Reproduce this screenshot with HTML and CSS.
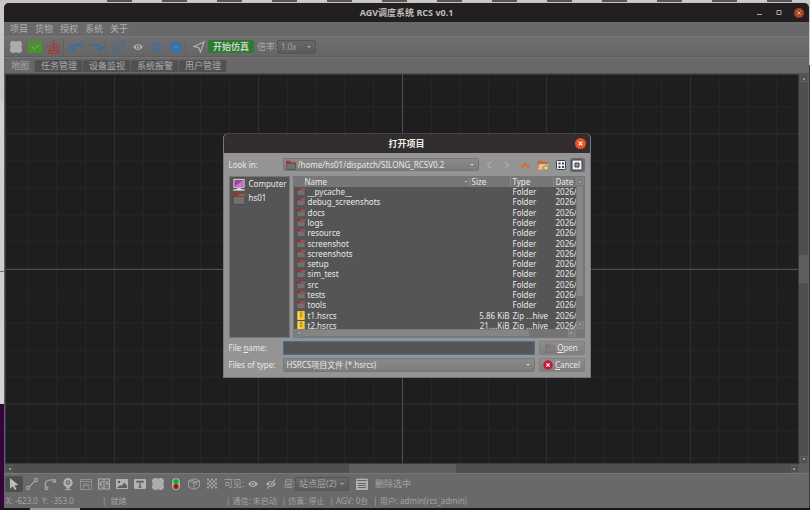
FILE: index.html
```
<!DOCTYPE html>
<html lang="zh">
<head>
<meta charset="utf-8">
<title>AGV调度系统 RCS v0.1</title>
<link rel="stylesheet" href="styles.css">
</head>
<body>
<svg width="0" height="0" class="defs" aria-hidden="true">
  <symbol id="folder" viewBox="0 0 12 12"><path d="M0 2q0-1 1-1h3.500l1 1H11q1 0 1 1v2H0z" fill="#a62f3c"/><path d="M6 2h5q1 0 1 1v1H5z" fill="#b5603f"/><path d="M.5 4h11v6.500q0 1-1 1h-9q-1 0-1-1z" fill="#747071" stroke="#454243" stroke-width=".7"/></symbol>
  <symbol id="zip" viewBox="0 0 12 12"><rect x="1" y="0" width="10" height="12" rx="1" fill="#f3c637"/><path d="M6 1v7" stroke="#7b5a15" stroke-width="1.600" stroke-dasharray="1.300 .7"/><path d="M3 1v10" stroke="#ffe68a"/></symbol>
  <symbol id="eye" viewBox="0 0 12 12"><path d="M0 6Q6-1.500 12 6Q6 13.500 0 6z" fill="#b0b0b0"/><circle cx="6" cy="6" r="2.500" fill="#686868"/><circle cx="6" cy="6" r="1.200" fill="#b0b0b0"/></symbol>
  <symbol id="chip" viewBox="0 0 12 12"><path d="M2 0h2l1 .6h2L8 0h2l2 2v2l-.6 1v2l.6 1v2l-2 2H8l-1-.6H5L4 12H2L0 10V8l.6-1V5L0 4V2z" fill="#acacac"/></symbol>
</svg>
<div class="desk-left" aria-hidden="true"></div>
<main class="window">
  <header class="titlebar">
    <h1>AGV调度系统 RCS v0.1</h1>
    <div class="winbtns">
      <button aria-label="最小化"><svg viewBox="0 0 10 10"><path d="M3 6.500h5" stroke="#a8a8a8"/></svg></button>
      <button aria-label="最大化"><svg viewBox="0 0 10 10"><path d="M3 2.500h4v4H3z" fill="none" stroke="#a8a8a8"/></svg></button>
      <button aria-label="关闭" class="close"><svg viewBox="0 0 10 10"><path d="M3.300 3.300l3.400 3.400M6.700 3.300L3.300 6.700" stroke="#c9b5ad"/></svg></button>
    </div>
  </header>
  <nav class="menu"><button>项目</button><button>货物</button><button>授权</button><button>系统</button><button>关于</button></nav>
  <div class="toolbar">
    <button aria-label="车辆"><svg><use href="#chip"/></svg></button>
    <button aria-label="任务"><svg class="big" viewBox="0 0 14 14"><path d="M0 1h3v2h8V1h3v12H0z" fill="#4b942b"/><path d="M4 0h6v2H4z" fill="#4b942b"/><path d="M4 7l2.500 2L10.500 5.500" fill="none" stroke="#8aa67c"/></svg></button>
    <button aria-label="报警"><svg class="big" viewBox="0 0 14 14" fill="none" stroke="#ad3328"><path d="M3.500 10V7.500a3.500 3.500 0 0 1 7 0V10M1.500 10.500h11v2.500h-11zM7 0v2.500M2.500 2l1.500 1.500M11.500 2l-1.500 1.500M0 6.500h2M12 6.500h2M7 7v3"/><circle cx="7" cy="7" r="1" fill="#ad3328"/></svg></button>
    <span class="sep"></span>
    <button aria-label="撤销"><svg class="big" viewBox="0 0 14 14"><path d="M2 7.500Q6 3 13 5.500" fill="none" stroke="#2e6eae" stroke-width="1.700"/><path d="M0 5v5h5.500z" fill="#2e6eae"/></svg></button>
    <button aria-label="重做"><svg class="big" viewBox="0 0 14 14"><path d="M12 7.500Q8 3 1 5.500" fill="none" stroke="#2e6eae" stroke-width="1.700"/><path d="M14 5v5H8.500z" fill="#2e6eae"/></svg></button>
    <span class="sep"></span>
    <button aria-label="适应窗口"><svg viewBox="0 0 12 12" fill="none" stroke="#2e6eae"><path d="M.5 6V1.500H6M11.500 6v5H6" stroke-dasharray="1.500 1"/><path d="M1.500 10.500l9-9M8 .5h3.500v3.500M.5 8v3.500H4"/></svg></button>
    <button aria-label="显示"><svg class="small"><use href="#eye"/></svg></button>
    <button aria-label="图层"><svg viewBox="0 0 12 12" fill="none" stroke="#2e72b8"><path d="M4.200 1L.5 6l3.700 5 3.700-5zM7.800 1L4.100 6l3.700 5 3.700-5z"/></svg></button>
    <button aria-label="设置"><svg viewBox="0 0 12 12"><path d="M3 .8l2 .8 1-1.400 1 1.400 2-.8 1 2.200 2 .5L11.200 6l.8 2.500-2 .5-1 2.200-2-.8-1 1.400-1-1.400-2 .8L2 9l-2-.5L.8 6 0 3.500 2 3z" fill="#2b73bd"/><circle cx="6" cy="6" r="1.800" fill="#7b7b7b"/></svg></button>
    <span class="sep"></span>
    <button aria-label="发送"><svg viewBox="0 0 12 12" fill="none" stroke="#b4b4b4" stroke-width="1.100"><path d="M11 1L1 5.500l4.500 1L7.500 11z"/></svg></button>
    <button class="go">开始仿真</button>
    <label for="rate">倍率:</label>
    <span class="select rate"><select id="rate"><option>1.0x</option></select></span>
  </div>
  <div class="tabs" role="tablist"><button role="tab" class="on" aria-selected="true">地图</button><button role="tab">任务管理</button><button role="tab">设备监视</button><button role="tab">系统报警</button><button role="tab">用户管理</button></div>
  <section class="work">
    <div class="canvas"></div>
    <div class="vbar"><i class="arrow up"></i><i class="thumb"></i><i class="arrow down"></i></div>
    <div class="hbar"><i class="arrow left"></i><i class="thumb"></i><i class="arrow right"></i></div>
  </section>
  <div class="tools">
    <button aria-label="选择" class="on"><svg viewBox="0 0 12 12"><path d="M2 0l8.500 7-4 .5 2 3.500-1.800 1-2-3.700L2 11z" fill="#bbb"/></svg></button>
    <button aria-label="直线"><svg viewBox="0 0 12 12" fill="none" stroke="#aaa" stroke-width="1.100"><circle cx="10" cy="2" r="1.600"/><circle cx="2" cy="10" r="1.600"/><path d="M3.200 8.800l5.600-5.600"/></svg></button>
    <button aria-label="曲线"><svg viewBox="0 0 12 12" fill="none" stroke="#aaa" stroke-width="1.200"><circle cx="10.300" cy="3" r="1.400"/><circle cx="2.500" cy="10.300" r="1.400"/><path d="M1.500 9Q-.5 1.500 9 2"/></svg></button>
    <button aria-label="站点"><svg viewBox="0 0 12 12"><path d="M6 0a4.700 4.700 0 0 1 2 8.900L6.500 11h-1L4 8.900A4.700 4.700 0 0 1 6 0z" fill="#b2b2b2"/><circle cx="6" cy="4.500" r="2.200" fill="#686868"/><circle cx="6" cy="4.500" r="1" fill="#b2b2b2"/><path d="M3 11.500h6" stroke="#aaa"/></svg></button>
    <button aria-label="区域"><svg viewBox="0 0 12 12" fill="none" stroke="#8f8f8f"><path d="M.5 1.500h11v10H.5zM.5 3.500h11M3.500 6h5.500v5.500H3.500zM3.500 7.500h5.500"/></svg></button>
    <button aria-label="货架"><svg viewBox="0 0 12 12" fill="none" stroke="#b0b0b0" stroke-width="1.200"><path d="M.6 1h10.800v10H.6zM6 1v10M.6 6h2M9 6h2.400M3 3.500h2M7.500 3.500h1.500v2.500h-1.500M3 4v4M8 8.500h1.500M3 9h1.500"/></svg></button>
    <button aria-label="图片"><svg viewBox="0 0 12 12"><rect y="1" width="12" height="10" rx="1" fill="#b2b2b2"/><circle cx="3" cy="4" r="1.200" fill="#606060"/><path d="M1 10l3-3 1.500 1L8.500 4.500 11 8v2z" fill="#606060"/></svg></button>
    <button aria-label="文本"><svg viewBox="0 0 12 12"><rect y="1" width="12" height="10" rx="1" fill="#b2b2b2"/><path d="M3 5V3.500h6V5M6 3.500V9M4.500 9h3" fill="none" stroke="#606060" stroke-width="1.300"/></svg></button>
    <button aria-label="车辆"><svg><use href="#chip"/></svg></button>
    <button aria-label="交通灯"><svg viewBox="0 0 12 12"><rect x="2" y="0" width="8" height="12" rx="4" fill="#aaa"/><circle cx="6" cy="3.500" r="2.500" fill="#0fae24"/><circle cx="6" cy="8.600" r="2.500" fill="#a51509"/></svg></button>
    <button aria-label="立体"><svg viewBox="0 0 12 12" fill="none" stroke="#a5a5a5" stroke-width=".9"><path d="M6 .8l5.500 2v6L6 11.500.5 8.800v-6zM.5 3L6 5l5.500-2.200M6 5v6.500M3 2l5.500 2v3"/></svg></button>
    <button aria-label="网格"><svg viewBox="0 0 12 12"><path d="M1 1.500h10M1 5.500h10M1 9.500h10" stroke="#a2a2a2" stroke-width="2" stroke-dasharray="2 2"/><path d="M3 3.500h8M3 7.500h8" stroke="#a2a2a2" stroke-width="2" stroke-dasharray="2 2"/></svg></button>
    <span class="lbl">可见:</span>
    <button aria-label="可见"><svg class="small"><use href="#eye"/></svg></button>
    <button aria-label="隐藏"><svg class="small" viewBox="0 0 12 12"><use href="#eye"/><path d="M1.500 11.500l9.500-11" stroke="#686868" stroke-width="3"/><path d="M1.500 11.500l9.500-11" stroke="#b0b0b0" stroke-width="1.300"/></svg></button>
    <label for="layer">层:</label>
    <span class="select layer"><select id="layer"><option>站点层(2)</option></select></span>
    <button class="del"><svg viewBox="0 0 12 12"><path d="M0 1h12v11H0z" fill="#b0b0b0"/><path d="M2 0v2M4.700 0v2M7.300 0v2M10 0v2" stroke="#b0b0b0"/><path d="M1 2.500h10M2 5.500h8M2 7.500h8M2 9.500h8" stroke="#666"/></svg><span>删除选中</span></button>
  </div>
  <footer class="status"><span class="xy">X: -623.0&nbsp; Y: -353.0</span><span class="ready">|&nbsp; 就绪</span><span>| 通信: 未启动</span><span>| 仿真: 停止</span><span>| AGV: 0台</span><span>| 用户: admin(rcs_admin)</span></footer>
  <form class="dialog" role="dialog" aria-labelledby="dt">
    <header><h2 id="dt">打开项目</h2><button type="button" class="close" aria-label="关闭"><svg viewBox="0 0 10 10"><path d="M3.300 3.300l3.400 3.400M6.700 3.300L3.300 6.700" stroke="#fff"/></svg></button></header>
    <div class="look">
      <label for="path">Look in:</label>
      <span class="select path"><svg><use href="#folder"/></svg><select id="path"><option>/home/hs01/dispatch/SILONG_RCSV0.2</option></select></span>
      <button type="button" aria-label="Back"><svg viewBox="0 0 12 12"><path d="M8 2.500L4.500 6 8 9.500" fill="none" stroke="#aaa" stroke-width="1.300"/></svg></button>
      <button type="button" aria-label="Forward"><svg viewBox="0 0 12 12"><path d="M4 2.500L7.500 6 4 9.500" fill="none" stroke="#aaa" stroke-width="1.300"/></svg></button>
      <button type="button" aria-label="Up"><svg viewBox="0 0 12 12"><path d="M2 8.500L6 5l4 3.500" fill="none" stroke="#dc6836" stroke-width="2.200"/></svg></button>
      <button type="button" aria-label="New folder"><svg viewBox="0 0 12 12"><path d="M1 2h4l1 1h5v7H1z" fill="#c46a32"/><path d="M2 5h9v5.500H1z" fill="#f0bb85"/><path d="M9 6v6M6 9h6" stroke="#7d9a2c" stroke-width="2.500"/><path d="M9 7v4M7 9h4" stroke="#eee"/></svg></button>
      <button type="button" aria-label="List view"><svg viewBox="0 0 12 12"><rect x="1.500" y="1.500" width="9" height="9" rx="1" fill="#f2f2f2" stroke="#333f50"/><path d="M3.500 3.500h2v2h-2zM7 3.500h2v2H7zM3.500 7h2v2h-2zM7 7h2v2H7z" fill="#333f50"/></svg></button>
      <button type="button" aria-label="Detail view" class="on"><svg viewBox="0 0 12 12"><rect x="1" y="1" width="10" height="10" rx="1" fill="#f5f5f5" stroke="#333f50"/><path d="M4 4h4v4H4z" fill="#999" stroke="#333f50"/></svg></button>
    </div>
    <div class="browse">
      <ul class="places">
        <li><svg viewBox="0 0 14 14"><rect x="1" y="1" width="12" height="9.500" fill="#ddd"/><rect x="2" y="2" width="10" height="7.500" fill="#a33fa5"/><path d="M2 9.500L12 2v7.500z" fill="#c777c5"/><path d="M5 11h4v1H5zM1 12h12v1.500H1z" fill="#eee"/></svg>Computer</li>
        <li><svg><use href="#folder"/></svg>hs01</li>
      </ul>
      <div class="files">
        <div class="pane">
          <table>
            <colgroup><col class="c1"><col class="c2"><col class="c3"><col class="c4"></colgroup>
            <thead><tr><th class="name">Name</th><th>Size</th><th>Type</th><th>Date</th></tr></thead>
            <tbody>
              <tr><td><svg><use href="#folder"/></svg>__pycache__</td><td></td><td>Folder</td><td>2026/</td></tr>
              <tr><td><svg><use href="#folder"/></svg>debug_screenshots</td><td></td><td>Folder</td><td>2026/</td></tr>
              <tr><td><svg><use href="#folder"/></svg>docs</td><td></td><td>Folder</td><td>2026/</td></tr>
              <tr><td><svg><use href="#folder"/></svg>logs</td><td></td><td>Folder</td><td>2026/</td></tr>
              <tr><td><svg><use href="#folder"/></svg>resource</td><td></td><td>Folder</td><td>2026/</td></tr>
              <tr><td><svg><use href="#folder"/></svg>screenshot</td><td></td><td>Folder</td><td>2026/</td></tr>
              <tr><td><svg><use href="#folder"/></svg>screenshots</td><td></td><td>Folder</td><td>2026/</td></tr>
              <tr><td><svg><use href="#folder"/></svg>setup</td><td></td><td>Folder</td><td>2026/</td></tr>
              <tr><td><svg><use href="#folder"/></svg>sim_test</td><td></td><td>Folder</td><td>2026/</td></tr>
              <tr><td><svg><use href="#folder"/></svg>src</td><td></td><td>Folder</td><td>2026/</td></tr>
              <tr><td><svg><use href="#folder"/></svg>tests</td><td></td><td>Folder</td><td>2026/</td></tr>
              <tr><td><svg><use href="#folder"/></svg>tools</td><td></td><td>Folder</td><td>2026/</td></tr>
              <tr><td><svg><use href="#zip"/></svg>t1.hsrcs</td><td>5.86 KiB</td><td>Zip …hive</td><td>2026/</td></tr>
              <tr><td><svg><use href="#zip"/></svg>t2.hsrcs</td><td>21.…KiB</td><td>Zip …hive</td><td>2026/</td></tr>
            </tbody>
          </table>
        </div>
        <div class="vbar"><i class="arrow up"></i><i class="thumb"></i><i class="arrow down"></i></div>
        <div class="hbar"><i class="arrow left"></i><i class="thumb"></i><i class="arrow right"></i></div>
      </div>
    </div>
    <div class="fields">
      <label for="fn">File <u>n</u>ame:</label><input id="fn" type="text">
      <button type="button" class="btn open"><svg><use href="#folder"/></svg><span><u>O</u>pen</span></button>
      <label for="ft">Files of type:</label><span class="select type"><select id="ft"><option>HSRCS项目文件 (*.hsrcs)</option></select></span>
      <button type="button" class="btn"><svg viewBox="0 0 12 12"><circle cx="6" cy="6" r="5.700" fill="#c61a35"/><path d="M4 4l4 4M8 4L4 8" stroke="#fff" stroke-width="1.400"/></svg><span><u>C</u>ancel</span></button>
    </div>
  </form>
</main>
</body>
</html>
```
FILE: styles.css
```
* { box-sizing: border-box; }
html, body { height: 100%; margin: 0; }
body {
  display: flex;
  padding: 3px 1px 2px 0;
  overflow: hidden;
  background:
    linear-gradient(90deg, transparent 30px, #a39796 30px, #a39796 80px, transparent 80px) bottom / 100% 2px no-repeat,
    linear-gradient(#19151a, #19151a) bottom / 100% 2px no-repeat,
    repeating-linear-gradient(90deg, #555 0 25px, #c9c9c9 25px 55px) 107px 0 / 100% 2px no-repeat,
    linear-gradient(#c4c4c4 65px, #3a3a3c 65px);
  font: 8px/10px "Noto Sans", "Noto Sans CJK SC", sans-serif;
  color: #b0b0b0;
}
.defs { position: absolute; }
button, input, select { margin: 0; padding: 0; border: 0; background: none; font: inherit; color: inherit; }
svg { display: block; flex: none; width: 12px; height: 12px; overflow: visible; }
h1, h2 { margin: 0; font-size: 9px; line-height: 12px; font-weight: 700; }

.desk-left {
  flex: none;
  width: 4px;
  background: linear-gradient(#c9c9c9 98px, #d2d2d2 98px, #cfcfcf 268px, #5f7087 268px, #5f7087 269px, #cfcfcf 269px, #d5d5d5 401px, #35043a 401px);
}
.window {
  position: relative;
  display: flex;
  flex: 1;
  flex-direction: column;
  min-width: 0;
  border-radius: 5px 5px 0 0;
  background: #696969;
  overflow: hidden;
}
.titlebar { position: relative; display: flex; flex: none; align-items: center; justify-content: center; height: 19px; background: #231f20; color: #bdbbb9; }
.winbtns { position: absolute; right: 5px; display: flex; gap: 10px; }
.winbtns svg { width: 10px; height: 10px; }
.close { border-radius: 50%; background: #ae4320; }

.menu { display: flex; flex: none; gap: 7px; height: 15px; padding: 0 6px; border-bottom: 1px solid #777; font-size: 9px; }
.toolbar { display: flex; flex: none; align-items: center; height: 20px; padding-left: 2px; border-bottom: 1px solid #5c5c5c; background: linear-gradient(#6f6f6f, #666); }
.toolbar > button { display: flex; align-items: center; justify-content: center; width: 19px; height: 18px; }
.toolbar .big { width: 14px; height: 14px; }
svg.small { width: 10px; height: 10px; }
.sep { width: 4px; height: 16px; border-left: 1px solid #626262; }
.toolbar > .go { width: 46px; height: 13px; border-radius: 2px; background: #2d7a32; color: #c6d3c6; font-size: 9px; font-weight: 700; }
.toolbar label { width: 23px; padding-left: 3px; font-size: 9px; color: #a5a5a5; white-space: nowrap; }

.select { position: relative; display: flex; align-items: center; border: 1px solid #555; border-radius: 2px; background: linear-gradient(#686868, #5b5b5b); }
.select select { flex: 1; min-width: 0; height: 12px; padding: 0 10px 0 3px; appearance: none; line-height: 12px; outline: 0; }
.select::after { content: ""; position: absolute; right: 4px; border: 2px solid transparent; border-top-color: #aaa; border-bottom: 0; }
.rate { width: 39px; height: 14px; color: #a5a5a5; }

.tabs { display: flex; flex: none; height: 17px; padding: 2px 1px 1px; border-top: 1px solid #757575; border-bottom: 1px solid #505050; }
.tabs button { padding: 0 6px; border-radius: 2px 2px 0 0; background: #515151; box-shadow: inset -1px 0 #606060; color: #aaa; font-size: 9px; }
.tabs .on { background: #686868; }

.work { display: grid; flex: 1; grid-template: minmax(0, 1fr) 9px / minmax(0, 1fr) 9px; padding: 0 1px; min-height: 0; background: #5e5e5e; }
.canvas {
  border: 1px solid #3a3a3a;
  background:
    linear-gradient(#505050, #505050) center / 1px 100% no-repeat,
    linear-gradient(#505050, #505050) center / 100% 1px no-repeat,
    linear-gradient(90deg, transparent 72px, #303031 72px 73px, transparent 73px) center / 144px 135px,
    linear-gradient(transparent 67px, #303031 67px 68px, transparent 68px) center / 144px 135px,
    linear-gradient(90deg, transparent 14px, #252527 14px 15px, transparent 15px 43px, #252527 43px 44px, transparent 44px 101px, #252527 101px 102px, transparent 102px 130px, #252527 130px 131px, transparent 131px) center / 144px 135px,
    linear-gradient(transparent 13px, #252527 13px 14px, transparent 14px 40px, #252527 40px 41px, transparent 41px 94px, #252527 94px 95px, transparent 95px 121px, #252527 121px 122px, transparent 122px) center / 144px 135px,
    #1e1e20;
}
.vbar, .hbar { display: flex; align-items: center; justify-content: space-between; background: #4f4f4f; }
.vbar { flex-direction: column; }
.thumb { background: #5e5e5e; }
.vbar .thumb { width: 100%; height: 28px; }
.hbar .thumb { width: 107px; height: 100%; }
.arrow { flex: none; width: 8px; height: 8px; border: 1px solid #5c5c5c; background: conic-gradient(from 150deg at 50% 0%, #9a9a9a 60deg, transparent 60deg) center / 4px 3px no-repeat; }
.down { transform: rotate(180deg); }
.left { transform: rotate(-90deg); }
.right { transform: rotate(90deg); }

.tools { display: flex; flex: none; align-items: center; height: 21px; padding-left: 1px; border-top: 1px solid #777; font-size: 9px; color: #a5a5a5; }
.tools > button { display: flex; flex: none; align-items: center; justify-content: center; width: 18px; height: 16px; }
.tools > .on { border-radius: 2px; background: #4e4e4e; }
.tools .lbl { width: 23px; padding-left: 3px; white-space: nowrap; }
.tools label { width: 15px; padding-left: 4px; white-space: nowrap; }
.layer { width: 54px; height: 14px; }
.tools > .del { width: auto; gap: 7px; margin-left: 7px; }
.status { display: flex; flex: none; gap: 5px; height: 14px; padding-left: 2px; line-height: 14px; color: #a3a3a3; white-space: nowrap; }
.xy { width: 91px; }
.ready { width: 119px; }

.dialog { position: absolute; inset: 0; width: 368px; height: fit-content; margin: auto; border: 1px solid #777; border-top-color: #444; border-radius: 5px 5px 0 0; background: #949494; color: #e8e8e8; overflow: hidden; }
.dialog header { position: relative; display: flex; align-items: center; justify-content: center; height: 19px; background: #322e2f; color: #eee; }
.dialog .close { position: absolute; right: 4px; width: 11px; height: 11px; background: #e95322; }
.dialog .close svg { width: 11px; height: 11px; }
.look { display: flex; align-items: center; height: 23px; padding: 0 5px; }
.look label { width: 54px; }
.dialog .select { border-color: #777; background: linear-gradient(#8a8a8a, #7d7d7d); }
.dialog .select::after { border-top-color: #ccc; }
.path { flex: 1; height: 13px; padding-left: 2px; margin-right: 1px; }
.path svg { width: 10px; height: 10px; }
.path select { padding-left: 2px; }
.look button { display: flex; align-items: center; justify-content: center; width: 18px; height: 14px; }
.look .on { width: 15px; border-radius: 2px; background: #6c6c6c; }

.browse { display: grid; grid-template: minmax(0, 1fr) / 61px minmax(0, 1fr); gap: 3px; height: 162px; padding: 0 5px; }
.places { margin: 0; padding: 0 2px; border: 1px solid #777; background: #555; list-style: none; }
.places li { display: flex; align-items: center; gap: 3px; height: 14px; }
.places svg { width: 14px; height: 13px; }
.files { display: grid; grid-template: minmax(0, 1fr) 8px / minmax(0, 1fr) 8px; border: 1px solid #777; background: #777; }
.pane { overflow: hidden; background: #555; }
.pane table { width: 292px; height: 154px; table-layout: fixed; border-collapse: collapse; white-space: nowrap; }
.c1 { width: 176px; }
.c2 { width: 41px; }
.c3 { width: 43px; }
.pane th, .pane td { padding: 0 0 0 2px; line-height: 10px; }
.pane th { height: 10px; background: #777; box-shadow: inset -1px 0 #888; font-weight: 400; text-align: left; }
.pane .name { padding-left: 11px; background: conic-gradient(from -30deg at 50% 100%, #ccc 60deg, transparent 60deg) 170px 4px / 4px 2px no-repeat, #777; }
.pane td svg { float: left; width: 10px; height: 9px; margin-right: 2px; }
.pane td:nth-child(2) { padding-right: 1px; text-align: right; }
.files .vbar, .files .hbar { background: #747474; }
.files .thumb { background: #858585; border: 1px solid #777; }
.files .vbar .thumb { flex: 1; margin-bottom: 24px; }
.files .hbar .thumb { flex: 1; margin-right: 38px; }
.files .arrow { border-color: #858585; background-color: #7d7d7d; }

.fields { display: grid; grid-template-columns: 50px minmax(0, 1fr) 46px; gap: 3px 4px; align-items: center; padding: 3px 5px 5px; }
.fields label { white-space: nowrap; }
.fields input { height: 14px; min-width: 0; border: 1px solid #456f9f; background: #555; }
.type { height: 14px; }
.fields .btn { display: flex; align-items: center; justify-content: center; gap: 2px; height: 14px; border: 1px solid #808080; border-radius: 2px; background: linear-gradient(#8e8e8e, #7f7f7f); }
.btn svg { width: 10px; height: 10px; }
.open svg { opacity: .3; }
```
